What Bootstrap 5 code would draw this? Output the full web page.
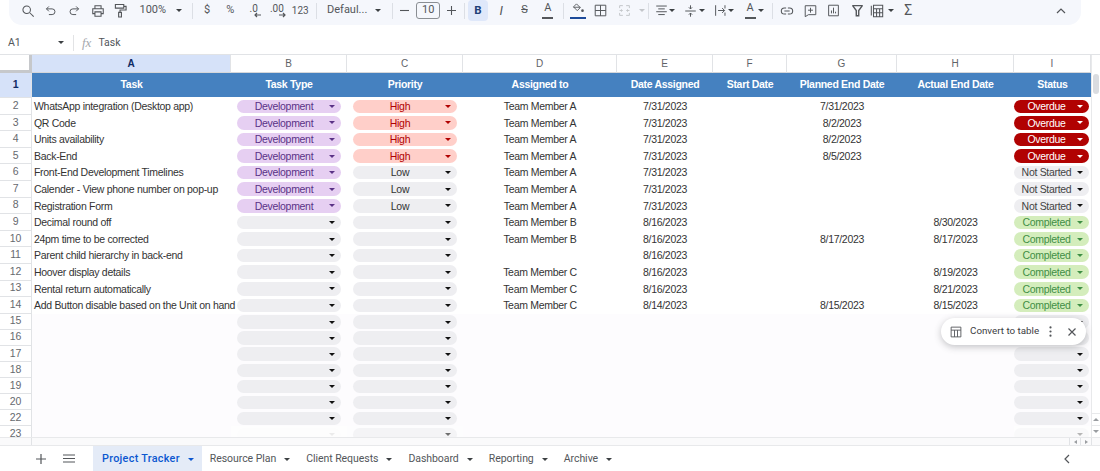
<!DOCTYPE html>
<html lang="en">
<head>
  <meta charset="UTF-8">
  <meta name="viewport" content="width=device-width, initial-scale=1.0">
  <title>Project Tracker</title>
  <link href="https://cdn.jsdelivr.net/npm/bootstrap@5.3.0/dist/css/bootstrap.min.css" rel="stylesheet">
  <style>
    html, body { height: 471px; overflow: hidden; }
    body { font-family: "Liberation Sans", Arial, sans-serif; font-size: 11px; color: #3c4043; background: #fff; }
    svg { display: block; fill: none; stroke: #53565a; stroke-width: 1.2; }

    /* toolbar */
    .tool-wrap { height: 31px; padding: 0 19px 0 9px; }
    .tool-bar { height: 25px; padding-bottom: 4px; background: #f5f7fc; border-radius: 0 0 13px 13px; font-family: Roboto, sans-serif; font-size: 11px; color: #53565a; }
    .tb { width: 23.3px; height: 21px; flex: none; }
    .tb-num { font-size: 10px; }
    .tri { display: inline-block; width: 0; height: 0; border: 3px solid transparent; border-top: 3.5px solid #3c4043; border-bottom: 0; flex: none; }
    .sep { width: 1px; height: 16px; background: #dcdfe5; flex: none; }
    .grp-1 { width: 183px; padding-left: 7px; }
    .grp-2 { width: 123px; padding-left: 2.4px; }
    .grp-3 { width: 75px; padding-left: 10px; }
    .grp-4 { width: 71px; }
    .grp-5 { width: 98px; padding-left: 3px; }
    .grp-6 { width: 84px; padding-left: 2px; }
    .grp-7 { width: 123px; padding-left: 4px; }
    .grp-8 { flex: 1; padding-left: 2.500px; }
    .zoom-val { width: 33px; margin: 0 4px 0 7px; }
    .font-val { width: 48px; }
    .size-box { width: 24px; height: 17px; border: 1px solid #8a8e93; border-radius: 3px; }
    .plus-slot { width: 22px; }
    .bold-btn { width: 20px; height: 21px; background: #dfe8fa; border-radius: 4px; font-weight: 700; font-size: 11.5px; color: #1f3f77; margin-right: 1.500px; }
    .ital-mark { font-size: 13px; font-style: italic; }
    .sum-mark { font-size: 14px; }
    .fill-bar { width: 16px; height: 2px; background: #1c4a9a; }
    .text-bar { width: 11px; height: 1.500px; background: #53565a; }
    .tb-pair { width: 29.7px; }
    .tb-ico { width: 16px; }
    .nudge-arrow { position: absolute; right: 3px; bottom: 3px; }
    .tri-off { border-top-color: #c3c6ca; margin-left: 3px; }
    .tri-tbl { margin: 0 3px; }
    .stroke-off { stroke: #c3c6ca; }
    .fill-solid { fill: #53565a; stroke: none; }

    /* formula bar */
    .formula-row { height: 23px; font-family: Roboto, sans-serif; font-size: 10.5px; color: #53565a; }
    .name-box { width: 73px; padding-left: 8px; padding-right: 9px; }
    .fx-mark { font-family: "Liberation Serif", serif; font-style: italic; font-size: 13px; color: #a5a8ad; margin: 0 7px 0 8px; }
    .vline { width: 1px; height: 16px; background: #e2e3e5; }

    /* sheet */
    .sheet-grid { display: grid; height: 383px; overflow: hidden; border-top: 1px solid #e1e3e6;
      grid-template-columns: 32px 199px 116px 116px 154px 96px 74px 110px 117px 77px 9px;
      grid-template-rows: 18px 25px repeat(13, 16.6px) repeat(8, 16.1px); }
    .col-head { color: #5f6368; font-size: 10px; border-right: 1px solid #e1e3e6; border-bottom: 1px solid #d5d7da; }
    .col-sel { background: #d6e2f9; color: #0f2a63; font-weight: 700; }
    .corner { border-right: 3px solid #c6c8cb; border-bottom: 3px solid #c6c8cb; }
    .row-head { color: #66696e; font-size: 10.5px; letter-spacing: -.2px; border-right: 1px solid #e1e3e6; border-bottom: 1px solid #e1e3e6; background: #fff; }
    .row-sel { background: #d6e2f9; color: #0f2a63; font-weight: 700; }
    .title-cell { background: #4581c0; color: #fff; font-weight: 700; font-size: 10.5px; letter-spacing: -.3px; margin-bottom: 1px; }
    .data-cell { color: #333; font-size: 10.5px; letter-spacing: -.3px; line-height: 17.5px; white-space: nowrap; }
    .task-cell { padding-left: 2px; }
    .chip-slot { min-width: 0; }
    .low-band { background: #fdfcfe; }
    .rail { border-left: 1px solid #e8e9eb; }
    .rail-thumb { position: absolute; left: 1093px; top: 74px; width: 6px; height: 20px; background: #dadce0; border-radius: 3px; }
    .rail-up, .rail-down { position: absolute; left: 1092px; width: 8px; height: 12px; }
    .rail-up { top: 413px; border-top: 1px solid #e8e9eb; }
    .rail-down { top: 425px; border-top: 1px solid #e8e9eb; }
    .tri-up { border-top: 0; border-bottom: 3px solid #9a9da1; }
    .tri-down { border-top-color: #9a9da1; }
    .chip { height: 13.600px; width: 104px; padding-right: 4px; font-size: 10.5px; letter-spacing: -.3px; line-height: 1; margin-top: 1.500px; }
    .chip-wide { width: 74.500px; margin-left: -2px; }
    .chip-txt { flex: 1; text-align: center; padding-left: 2px; }
    .chip .tri { border-top-color: currentColor; margin-right: 2px; }
    .chip-none { background: #eeeef1; color: #222; }
    .chip-none .tri, .chip-low .tri, .chip-todo .tri { border-top-color: #111; }
    .chip-dev { background: #e6cff2; color: #5a3286; }
    .chip-high { background: #ffcfc9; color: #b10202; }
    .chip-low { background: #eeeef1; color: #333; }
    .chip-over { background: #b10202; color: #fff; }
    .chip-todo { background: #eeeef1; color: #444; }
    .chip-done { background: #d4edbc; color: #3f8f45; }
    .fade-b { opacity: .08; }
    .fade-c { opacity: .6; }
    .fade-i { opacity: .3; }

    /* popup */
    .convert-pop { position: absolute; left: 941px; top: 318px; width: 145px; height: 27px; background: #fff; border-radius: 14px; box-shadow: 0 2px 7px rgba(60,64,67,.3); font-family: Roboto, sans-serif; font-size: 9.800px; color: #3c4043; padding: 0 10px 0 9px; }

    /* bottom */
    .hscroll { height: 9px; border-top: 1px solid #e8e9eb; border-bottom: 1px solid #e8e9eb; background: #fafafb; }
    .h-gutter { width: 32px; height: 100%; border-right: 1px solid #e1e3e6; }
    .h-arrow { width: 11px; height: 100%; border-left: 1px solid #e1e3e6; }
    .h-end { width: 9px; height: 100%; border-left: 1px solid #e1e3e6; }
    .tri-left { border: 2.500px solid transparent; border-left: 0; border-right: 3px solid #9a9da1; }
    .tri-right { border: 2.500px solid transparent; border-right: 0; border-left: 3px solid #9a9da1; }
    .tab-bar { height: 25px; font-family: Roboto, sans-serif; font-size: 10.500px; letter-spacing: -.05px; color: #53565a; }
    .tab-add { margin-left: 36px; }
    .tab-menu { margin: 0 18px 0 17px; }
    .tab-back { margin-right: 30px; }
    .sheet-tab { height: 25px; padding: 1px 8px 0; }
    .sheet-tab .tri { margin-left: 8px; }
    .tab-on { background: #e4ebf7; color: #0b57d0; font-size: 10.800px; letter-spacing: .3px; font-weight: 500; padding-left: 9px; }
    .tab-on .tri { border-top-color: #0b57d0; }
  </style>
</head>
<body class="position-relative">

<div class="tool-wrap">
  <div class="tool-bar d-flex align-items-center">
    <div class="grp-1 d-flex align-items-center">
      <div class="tb d-flex align-items-center justify-content-center"><svg width="14" height="14" viewBox="0 0 16 16"><circle cx="6.5" cy="6.5" r="4.3"/><path d="M10 10l4.5 4.5"/></svg></div>
      <div class="tb d-flex align-items-center justify-content-center"><svg width="13" height="13" viewBox="0 0 16 16"><path d="M3 6h7a3.5 3.5 0 0 1 0 7H6M3 6l3-3M3 6l3 3"/></svg></div>
      <div class="tb d-flex align-items-center justify-content-center"><svg width="13" height="13" viewBox="0 0 16 16"><path d="M13 6H6a3.5 3.5 0 0 0 0 7h4M13 6l-3-3M13 6l-3 3"/></svg></div>
      <div class="tb d-flex align-items-center justify-content-center"><svg width="14" height="14" viewBox="0 0 16 16"><path d="M4.500 5V2h7v3M4.500 11H2V5.500h12V11h-2.500M4.500 9h7v5h-7z"/></svg></div>
      <div class="tb d-flex align-items-center justify-content-center"><svg width="13" height="15" viewBox="0 0 14 16"><path d="M1.500 1.500h9v4h-9zM10.500 3.500h2.500v4H6.500v2.500M5 10h3v5H5z"/></svg></div>
      <div class="zoom-val">100%</div><span class="tri"></span>
    </div>
    <div class="sep"></div>
    <div class="grp-2 d-flex align-items-center">
      <div class="tb d-flex align-items-center justify-content-center">$</div>
      <div class="tb d-flex align-items-center justify-content-center">%</div>
      <div class="tb d-flex align-items-center justify-content-center position-relative tb-num pb-1">.0
        <svg class="nudge-arrow" width="8" height="6" viewBox="0 0 8 6"><path d="M7 3H1M3 1L1 3l2 2"/></svg></div>
      <div class="tb d-flex align-items-center justify-content-center position-relative tb-num pb-1">.00
        <svg class="nudge-arrow" width="8" height="6" viewBox="0 0 8 6"><path d="M1 3h6M5 1l2 2-2 2"/></svg></div>
      <div class="tb d-flex align-items-center justify-content-center tb-num">123</div>
    </div>
    <div class="sep"></div>
    <div class="grp-3 d-flex align-items-center">
      <div class="font-val text-nowrap">Defaul...</div><span class="tri"></span>
    </div>
    <div class="sep"></div>
    <div class="grp-4 d-flex align-items-center">
      <div class="tb d-flex align-items-center justify-content-center"><svg width="9" height="9" viewBox="0 0 10 10"><path d="M0 5h10"/></svg></div>
      <div class="size-box d-flex align-items-center justify-content-center">10</div>
      <div class="plus-slot d-flex align-items-center justify-content-center"><svg width="9" height="9" viewBox="0 0 10 10"><path d="M0 5h10M5 0v10"/></svg></div>
    </div>
    <div class="sep"></div>
    <div class="grp-5 d-flex align-items-center">
      <div class="bold-btn d-flex align-items-center justify-content-center">B</div>
      <div class="tb d-flex align-items-center justify-content-center ital-mark">I</div>
      <div class="tb d-flex align-items-center justify-content-center text-decoration-line-through">S</div>
      <div class="tb d-flex flex-column align-items-center justify-content-center"><span class="lh-1">A</span><span class="text-bar mt-1"></span></div>
    </div>
    <div class="sep"></div>
    <div class="grp-6 d-flex align-items-center">
      <div class="tb d-flex flex-column align-items-center justify-content-center"><svg width="12" height="10" viewBox="0 0 16 13"><path d="M6 1l5 5-4 4-5-5zM2 5.500h9"/><circle class="fill-solid" cx="14" cy="10" r="1.800"/></svg><span class="fill-bar mt-1"></span></div>
      <div class="tb d-flex align-items-center justify-content-center"><svg width="13" height="13" viewBox="0 0 16 16"><path d="M1.500 1.500h13v13h-13zM8 1.500v13M1.500 8h13"/></svg></div>
      <div class="tb d-flex align-items-center justify-content-center"><svg class="stroke-off" width="13" height="13" viewBox="0 0 16 16"><path d="M6 2H2v3M10 2h4v3M6 14H2v-3M10 14h4v-3M2 8h3M4 6.500L5.500 8 4 9.500M14 8h-3M12 6.500L10.500 8 12 9.500"/></svg></div>
      <span class="tri tri-off"></span>
    </div>
    <div class="sep"></div>
    <div class="grp-7 d-flex align-items-center">
      <div class="tb-pair d-flex align-items-center">
        <div class="tb-ico d-flex justify-content-center"><svg width="13" height="13" viewBox="0 0 16 16"><path d="M1.500 2.500h13M4 6h8M1.500 9.500h13M4 13h8"/></svg></div><span class="tri"></span>
      </div>
      <div class="tb-pair d-flex align-items-center">
        <div class="tb-ico d-flex justify-content-center"><svg width="13" height="14" viewBox="0 0 16 16"><path d="M1.500 8h13M8 1v4.500M6 3.500l2 2 2-2M8 15v-4.500M6 12.500l2-2 2 2"/></svg></div><span class="tri"></span>
      </div>
      <div class="tb-pair d-flex align-items-center">
        <div class="tb-ico d-flex justify-content-center"><svg width="13" height="13" viewBox="0 0 16 16"><path d="M2 1.500v13M13.500 1.500v4M13.500 10.500v4M5 8h8M10 5l3 3-3 3"/></svg></div><span class="tri"></span>
      </div>
      <div class="tb-pair d-flex align-items-center">
        <div class="tb-ico d-flex flex-column align-items-center"><span class="lh-1">A</span><span class="text-bar mt-1"></span></div><span class="tri"></span>
      </div>
    </div>
    <div class="sep"></div>
    <div class="grp-8 d-flex align-items-center">
      <div class="tb d-flex align-items-center justify-content-center"><svg width="14" height="14" viewBox="0 0 16 16"><path d="M7 4.500H5a3.500 3.500 0 0 0 0 7h2M9 4.500h2a3.500 3.500 0 0 1 0 7H9M5 8h6"/></svg></div>
      <div class="tb d-flex align-items-center justify-content-center"><svg width="13" height="14" viewBox="0 0 16 16"><path d="M1.500 1.500h13v11H5.500l-4 2.500zM8 4v6M5 7h6"/></svg></div>
      <div class="tb d-flex align-items-center justify-content-center"><svg width="13" height="13" viewBox="0 0 16 16"><path d="M2 1.500h12v13H2zM5.500 11.500V8M8 11.500V4.500M10.500 11.500V9.500"/></svg></div>
      <div class="tb d-flex align-items-center justify-content-center"><svg width="13" height="13" viewBox="0 0 16 16"><path d="M1.500 2h13M2 2l4.500 6v6.500h3V8L14 2" stroke-width="1.700"/></svg></div>
      <div class="tb-ico d-flex justify-content-center"><svg width="14" height="14" viewBox="0 0 16 16"><path d="M1.500 2v11M4 1.500h10.500v13H4zM4 5.500h10.500M4 10h10.500M7.500 5.500v9M11 5.500v9"/></svg></div>
      <span class="tri tri-tbl"></span>
      <div class="tb d-flex align-items-center justify-content-center sum-mark">Σ</div>
      <div class="tb d-flex align-items-center justify-content-center ms-auto me-2"><svg width="10" height="6" viewBox="0 0 10 6"><path d="M1 5l4-4 4 4"/></svg></div>
    </div>
  </div>
</div>

<div class="formula-row d-flex align-items-center">
  <div class="name-box d-flex align-items-center justify-content-between"><span>A1</span><span class="tri"></span></div>
  <div class="vline"></div>
  <span class="fx-mark">fx</span>
  <span>Task</span>
</div>

<div class="sheet-grid" id="sheet"></div>
<div class="rail-thumb"></div>
<div class="rail-up d-flex align-items-center justify-content-center"><span class="tri tri-up"></span></div>
<div class="rail-down d-flex align-items-center justify-content-center"><span class="tri tri-down"></span></div>

<div class="hscroll d-flex">
  <div class="h-gutter"></div>
  <div class="flex-grow-1"></div>
  <div class="h-arrow d-flex align-items-center justify-content-center"><span class="tri-left"></span></div>
  <div class="h-arrow d-flex align-items-center justify-content-center"><span class="tri-right"></span></div>
  <div class="h-end"></div>
</div>

<div class="tab-bar d-flex align-items-center">
  <svg class="tab-add" width="10" height="10" viewBox="0 0 10 10"><path d="M0 5h10M5 0v10"/></svg>
  <svg class="tab-menu" width="12" height="9" viewBox="0 0 12 9"><path d="M0 1h12M0 4.500h12M0 8h12"/></svg>
  <div class="sheet-tab tab-on d-flex align-items-center">Project Tracker<span class="tri"></span></div>
  <div class="sheet-tab d-flex align-items-center">Resource Plan<span class="tri"></span></div>
  <div class="sheet-tab d-flex align-items-center">Client Requests<span class="tri"></span></div>
  <div class="sheet-tab d-flex align-items-center">Dashboard<span class="tri"></span></div>
  <div class="sheet-tab d-flex align-items-center">Reporting<span class="tri"></span></div>
  <div class="sheet-tab d-flex align-items-center">Archive<span class="tri"></span></div>
  <svg class="ms-auto tab-back" width="6" height="10" viewBox="0 0 6 10"><path d="M5 1L1 5l4 4"/></svg>
</div>

<div class="convert-pop d-flex align-items-center">
  <svg width="12" height="12" viewBox="0 0 16 16"><path d="M1.500 1.500h13v13h-13zM1.500 5.500h13M6 5.500v9M10 5.500v9"/></svg>
  <span class="ms-2 flex-grow-1">Convert to table</span>
  <svg width="3" height="11" viewBox="0 0 3 12" class="fill-solid"><circle cx="1.500" cy="1.500" r="1.200"/><circle cx="1.500" cy="6" r="1.200"/><circle cx="1.500" cy="10.500" r="1.200"/></svg>
  <svg class="ms-3" width="8" height="8" viewBox="0 0 8 8"><path d="M.5.5l7 7M7.500.5l-7 7"/></svg>
</div>

<script src="https://cdn.jsdelivr.net/npm/bootstrap@5.3.0/dist/js/bootstrap.bundle.min.js"></script>
<script>
  const titles = ['Task', 'Task Type', 'Priority', 'Assigned to', 'Date Assigned', 'Start Date', 'Planned End Date', 'Actual End Date', 'Status'];
  // task, type, priority, assigned, date, planned, actual, status
  const rows = [
    ['WhatsApp integration (Desktop app)', 'D', 'High', 'Team Member A', '7/31/2023', '7/31/2023', '', 'Overdue'],
    ['QR Code', 'D', 'High', 'Team Member A', '7/31/2023', '8/2/2023', '', 'Overdue'],
    ['Units availability', 'D', 'High', 'Team Member A', '7/31/2023', '8/2/2023', '', 'Overdue'],
    ['Back-End', 'D', 'High', 'Team Member A', '7/31/2023', '8/5/2023', '', 'Overdue'],
    ['Front-End Development Timelines', 'D', 'Low', 'Team Member A', '7/31/2023', '', '', 'Not Started'],
    ['Calender - View phone number on pop-up', 'D', 'Low', 'Team Member A', '7/31/2023', '', '', 'Not Started'],
    ['Registration Form', 'D', 'Low', 'Team Member A', '7/31/2023', '', '', 'Not Started'],
    ['Decimal round off', '', '', 'Team Member B', '8/16/2023', '', '8/30/2023', 'Completed'],
    ['24pm time to be corrected', '', '', 'Team Member B', '8/16/2023', '8/17/2023', '8/17/2023', 'Completed'],
    ['Parent child hierarchy in back-end', '', '', '', '8/16/2023', '', '', 'Completed'],
    ['Hoover display details', '', '', 'Team Member C', '8/16/2023', '', '8/19/2023', 'Completed'],
    ['Rental return automatically', '', '', 'Team Member C', '8/16/2023', '', '8/21/2023', 'Completed'],
    ['Add Button disable based on the Unit on hand', '', '', 'Team Member C', '8/14/2023', '8/15/2023', '8/15/2023', 'Completed']
  ];
  // the screen recording skips row 21
  const rowLabels = [2, 3, 4, 5, 6, 7, 8, 9, 10, 11, 12, 13, 14, 15, 16, 17, 18, 19, 20, 22, 23];
  const chipClass = { High: 'chip-high', Low: 'chip-low', Overdue: 'chip-over', 'Not Started': 'chip-todo', Completed: 'chip-done', Development: 'chip-dev', '': 'chip-none' };

  function chip(text, wide, extra) {
    return `<div class="chip-slot d-flex justify-content-center ${extra}"><div class="chip ${wide ? 'chip-wide ' : ''}${chipClass[text]} rounded-pill d-flex align-items-center"><span class="chip-txt">${text}</span><span class="tri"></span></div></div>`;
  }

  let html = '<div class="corner"></div>';
  'ABCDEFGHI'.split('').forEach((c, i) => {
    html += `<div class="col-head d-flex align-items-center justify-content-center${i === 0 ? ' col-sel' : ''}">${c}</div>`;
  });
  html += '<div class="rail"></div>';
  html += '<div class="row-head row-sel d-flex align-items-center justify-content-center">1</div>';
  titles.forEach(t => { html += `<div class="title-cell d-flex align-items-center justify-content-center">${t}</div>`; });
  html += '<div class="rail"></div>';

  rowLabels.forEach((n, idx) => {
    const r = rows[idx] || ['', '', '', '', '', '', '', ''];
    const last = n === 23;
    const band = idx >= rows.length ? 'low-band' : '';
    const center = text => `<div class="data-cell text-center ${band}">${text}</div>`;
    html += `<div class="row-head d-flex align-items-center justify-content-center">${n}</div>`;
    html += `<div class="data-cell task-cell ${band}">${r[0]}</div>`;
    html += chip(r[1] === 'D' ? 'Development' : '', false, `${band} ${last ? 'fade-b' : ''}`);
    html += chip(r[2], false, `${band} ${last ? 'fade-c' : ''}`);
    html += center(r[3]) + center(r[4]) + center('') + center(r[5]) + center(r[6]);
    html += chip(r[7], true, `${band} ${last ? 'fade-i' : ''}`);
    html += '<div class="rail"></div>';
  });
  document.getElementById('sheet').innerHTML = html;
</script>

</body>
</html>
